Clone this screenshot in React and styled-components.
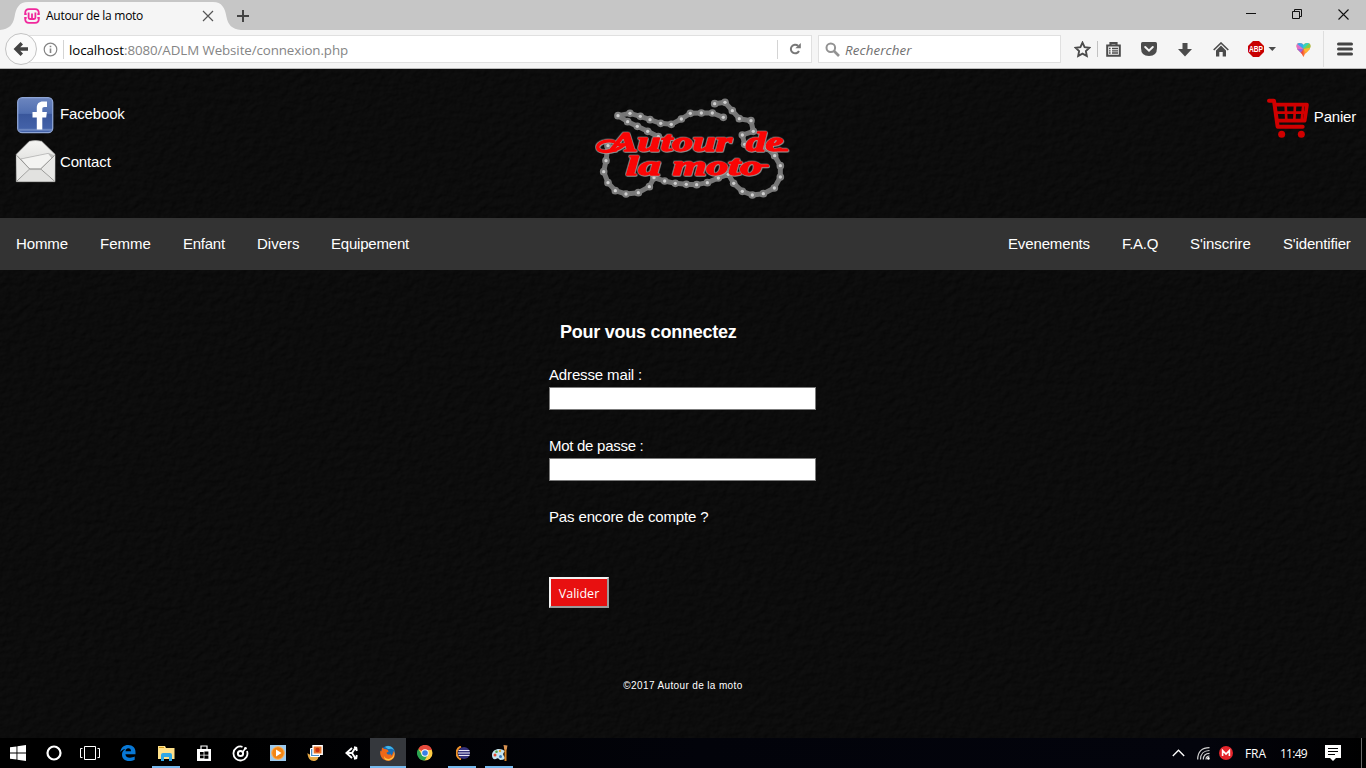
import React from "react";
import styled, { createGlobalStyle } from "styled-components";

const GlobalStyle = createGlobalStyle`
  * { box-sizing: border-box; }
  body { margin: 0; background: #0c0c0c; overflow: hidden; }
`;

const Screen = styled.div`
  width: 1366px;
  height: 768px;
  display: flex;
  flex-direction: column;
  font-family: "Open Sans", "Noto Sans", sans-serif;
`;

/* ---------- Browser ---------- */
const TabStrip = styled.div`
  height: 30px;
  flex: none;
  display: flex;
  background: #c6c6c6;
`;
const Tab = styled.div`
  position: relative;
  width: 231px;
  height: 30px;
  padding: 2px 17px 0 24px;
  display: flex;
  align-items: center;
  font: 12px/28px "Open Sans", sans-serif;
  color: #000;
`;
const TabShape = styled.svg`
  position: absolute;
  left: 0;
  top: 0;
`;
const TabTitle = styled.span`
  position: relative;
  flex: 1;
  margin-left: 6px;
  letter-spacing: -0.27px;
  white-space: nowrap;
`;
const Glyph = styled.svg`
  position: relative;
  display: block;
  flex: none;
`;
const NewTab = styled.div`
  padding: 9px 0 0 5px;
`;
const WindowButtons = styled.div`
  margin-left: auto;
  display: flex;
  height: 28px;
`;
const WindowButton = styled.div`
  width: 46px;
  display: grid;
  place-items: center;
`;
const Toolbar = styled.div`
  height: 39px;
  flex: none;
  display: flex;
  align-items: center;
  background: #f5f5f5;
  border-bottom: 1px solid #b9b9b9;
`;
const BackButton = styled.div`
  position: relative;
  z-index: 1;
  width: 32px;
  height: 32px;
  margin-left: 5px;
  border: 1px solid #c3c3c3;
  border-radius: 50%;
  background: #fafafa;
  display: grid;
  place-items: center;
`;
const Field = styled.div`
  width: ${(p) => p.$width}px;
  height: 28px;
  margin-left: ${(p) => p.$gap}px;
  padding-left: ${(p) => p.$pad}px;
  display: flex;
  align-items: center;
  background: #fff;
  border: 1px solid #e0e0e0;
  font-size: 13.33px;
`;
const Divider = styled.div`
  width: 1px;
  height: ${(p) => p.$height}px;
  margin-left: ${(p) => p.$gap || 0}px;
  background: ${(p) => p.$color || "#d4d4d4"};
  flex: none;
`;
const Url = styled.span`
  flex: 1;
  margin-left: 5px;
  padding-top: 1px;
  color: #858585;
  letter-spacing: -0.09px;
  white-space: pre;
  b { font-weight: 400; color: #000; }
`;
const Reload = styled.div`
  width: 33px;
  display: grid;
  place-items: center;
`;
const Placeholder = styled.span`
  margin-left: 5px;
  padding-top: 1px;
  font-style: italic;
  letter-spacing: 0.12px;
  color: #707070;
`;
const Tools = styled.div`
  margin-left: 6px;
  display: flex;
  align-items: center;
`;
const Tool = styled.div`
  width: ${(p) => p.$width}px;
  display: grid;
  place-items: center;
`;

/* ---------- Site ---------- */
const Page = styled.div`
  position: relative;
  flex: 1;
  color: #fff;
  font: 15px "Liberation Sans", Arial, sans-serif;
`;
const Texture = styled.svg`
  position: absolute;
  inset: 0;
`;
const Site = styled.div`
  position: relative;
`;
const Header = styled.header`
  height: 149px;
  display: grid;
  grid-template-columns: 580px 220px 1fr;
`;
const Contacts = styled.div`
  padding: 21px 0 0 15px;
`;
const ContactLink = styled.div`
  height: 48px;
  display: flex;
  align-items: center;
  gap: 3px;
  letter-spacing: -0.15px;
`;
const ContactName = styled.span`
  padding-bottom: 2px;
`;
const Logo = styled.svg`
  margin-top: 16px;
`;
const LogoText = styled.text`
  font: italic 700 82px "Liberation Serif", serif;
  fill: #fa0505;
  stroke: #fa0505;
  stroke-width: 4px;
  stroke-linejoin: round;
`;
const LogoWords = styled.g`
  filter: drop-shadow(2px 2px 0 #a5a5a5) drop-shadow(-2px -1px 0 #a5a5a5);
`;
const Cart = styled.div`
  padding: 29px 10px 0 0;
  height: 70px;
  display: flex;
  justify-content: flex-end;
  gap: 5px;
  line-height: 38px;
  letter-spacing: -0.2px;
`;
const Nav = styled.nav`
  height: 52px;
  display: flex;
  justify-content: space-between;
  background: #333;
`;
const NavGroup = styled.div`
  display: flex;
`;
const NavItem = styled.a`
  width: ${(p) => p.$width}px;
  padding-left: 16px;
  line-height: 52px;
  letter-spacing: ${(p) => p.$spacing}px;
  white-space: nowrap;
`;
const Form = styled.form`
  width: 267px;
  margin: 50px 0 0 549px;
`;
const Title = styled.h3`
  margin: 0 0 19px 11px;
  font-size: 18px;
  line-height: 24px;
  letter-spacing: -0.24px;
  white-space: nowrap;
`;
const Label = styled.label`
  display: block;
  line-height: 24px;
  letter-spacing: ${(p) => p.$spacing || -0.14}px;
`;
const Input = styled.input`
  display: block;
  width: 267px;
  height: 23px;
  margin: 0 0 24px;
  padding: 0;
  background: #fff;
  border: 1px solid #7b7b7b;
`;
const Submit = styled.button`
  display: block;
  width: 60px;
  height: 31px;
  margin-top: 48px;
  padding: 1px 0 0;
  color: #fff;
  background: #e81010;
  border: 2px solid;
  border-color: #f2f2f2 #999 #999 #f2f2f2;
  font: 12.5px "Open Sans", sans-serif;
`;
const Footer = styled.footer`
  margin-top: 70px;
  text-align: center;
  font-size: 10px;
  line-height: 16px;
  letter-spacing: 0.37px;
`;

/* ---------- Taskbar ---------- */
const Taskbar = styled.div`
  height: 30px;
  flex: none;
  display: flex;
  background: linear-gradient(90deg, #000 0 200px, #02030a 700px, #03040c 1200px, #000);
  color: #fff;
  font-size: 12px;
`;
const Task = styled.div`
  position: relative;
  width: ${(p) => p.$width || 37}px;
  height: 30px;
  display: grid;
  place-items: center;
  background: ${(p) => (p.$active ? "#35383d" : "transparent")};
  &::after {
    content: "";
    display: ${(p) => (p.$open || p.$active ? "block" : "none")};
    position: absolute;
    bottom: 0;
    left: ${(p) => (p.$active ? 0 : 4)}px;
    right: ${(p) => (p.$active ? 0 : 5)}px;
    height: 2px;
    background: #76b9ed;
  }
`;
const Tray = styled.div`
  margin-left: auto;
  padding-right: 4px;
  display: flex;
  align-items: center;
`;
const TrayText = styled.span`
  width: ${(p) => p.$width}px;
  margin-left: ${(p) => p.$gap}px;
  letter-spacing: ${(p) => p.$spacing || 0}px;
  white-space: nowrap;
`;
const TrayIcon = styled.div`
  margin-left: ${(p) => p.$gap}px;
`;

const chains = [
  [[404,56],[435,52],[457,77],[478,101],[513,107],[520,139],[487,150],[494,178]],
  [[430,97],[397,84],[364,84],[331,85],[304,102],[274,118],[242,115],[210,104],[181,94],[150,85],[114,92],[143,110],[172,124],[203,139],[235,155],[262,174]],
  [[84,182],[78,227],[71,260],[84,293],[106,317],[138,327],[175,323],[208,305],[222,278],[254,288],[286,295],[319,298],[350,299],[382,293],[415,279],[445,268],[461,295],[487,319],[517,330],[550,326],[583,309],[601,276],[601,242],[584,212],[562,190]],
];

function Chain({ points }) {
  return (
    <g>
      <polyline points={points.map((p) => p.join(",")).join(" ")} fill="none" stroke="#767676" strokeWidth="15" strokeLinejoin="round" />
      {points.map(([x, y]) => (
        <g key={`${x}-${y}`}>
          <circle cx={x} cy={y} r="11.5" fill="#7c7c7c" />
          <circle cx={x} cy={y} r="5" fill="#cfcfcf" />
        </g>
      ))}
    </g>
  );
}

function LogoLine({ children, x, y, width }) {
  return (
    <LogoText x={x} y={y} textLength={width} lengthAdjust="spacingAndGlyphs">
      {children}
    </LogoText>
  );
}

function BrandLogo() {
  return (
    <Logo width="220" height="125" viewBox="0 0 660 375">
      {chains.map((points, i) => <Chain key={i} points={points} />)}
      <LogoWords>
        <path d="M132 180C100 205 52 205 53 186C55 170 85 164 102 170" fill="none" stroke="#fa0505" strokeWidth="10" strokeLinecap="round" />
        <path d="M530 242H563M590 195H621" fill="none" stroke="#fa0505" strokeWidth="9" strokeLinecap="round" />
        <LogoLine x={90} y={197} width={366}>Autour</LogoLine>
        <LogoLine x={498} y={197} width={112}>de</LogoLine>
        <LogoLine x={138} y={269} width={104}>la</LogoLine>
        <LogoLine x={278} y={269} width={268}>moto</LogoLine>
      </LogoWords>
    </Logo>
  );
}

function FacebookIcon() {
  return (
    <svg width="42" height="42" viewBox="0 0 42 42">
      <defs>
        <linearGradient id="fb" x2="0" y2="1"><stop stopColor="#6c86bf" /><stop offset=".45" stopColor="#506eb0" /><stop offset=".46" stopColor="#39569b" /><stop offset="1" stopColor="#4665ac" /></linearGradient>
      </defs>
      <rect x="2.7" y="4.7" width="35" height="35" rx="4.5" fill="url(#fb)" stroke="#8ea5d5" strokeWidth="1.3" />
      <rect x="4" y="35.8" width="33" height="2" fill="#7c95cb" opacity=".7" />
      <path d="M21.8 36.5V24.5H17.5V19h4.3v-4c0-4.5 2.2-6.6 6.2-6.6h4V14h-2.4c-1.8 0-2.3.7-2.3 2v3h4.6l-.7 5.5h-3.9v12z" fill="#fff" />
    </svg>
  );
}

function EnvelopeIcon() {
  return (
    <svg width="42" height="44" viewBox="0 0 126 132">
      <defs>
        <linearGradient id="env" x2="0" y2="1"><stop stopColor="#f5f5f3" /><stop offset="1" stopColor="#d0d0ce" /></linearGradient>
      </defs>
      <path d="M4 43 43 4Q61-1 80 4L120 43V125H4Z" fill="url(#env)" stroke="#b4b4b2" strokeWidth="2" />
      <path d="M6 46 44 86H77L118 46 103 40 17 56Z" fill="#c3c3c1" />
      <path d="M17 57 100 40 111 54 77 87H44Z" fill="#f3f3f1" stroke="#aaa" strokeWidth="2" />
      <path d="M4 45 44 88 6 123ZM120 45 77 88 118 123Z" fill="#e8e8e6" />
      <path d="M5 46 44 87H77L119 46M6 123 44 87M77 87 118 123" fill="none" stroke="#979795" strokeWidth="3" />
      <path d="M7 124 42 91H79L117 124Z" fill="#e2e2e0" />
    </svg>
  );
}

function CartIcon() {
  return (
    <svg width="42" height="41" viewBox="81 39 126 123" fill="none" stroke="#d00000" strokeLinecap="round" strokeLinejoin="round">
      <path d="M87 47H102L113 125H188" strokeWidth="12" />
      <path d="M106 59H201L194 107H112" strokeWidth="11" />
      <path d="M109 83H198M137 60 139 106M165 60 163 106M190 60 185 106" strokeWidth="8" />
      <circle cx="125" cy="148" r="10.5" fill="#d00000" stroke="none" />
      <circle cx="184" cy="148" r="10.5" fill="#d00000" stroke="none" />
    </svg>
  );
}

function Browser() {
  return (
    <>
      <TabStrip>
        <Tab>
          <TabShape width="241" height="30"><path d="M0 30C9 29 13 25 14.5 17C16 8 19 2 28 2H213C222 2 225 8 226.5 17C228 25 232 29 241 30Z" fill="#f5f5f5" /></TabShape>
          <Glyph width="16" height="16" viewBox="0 0 16 16" fill="none" stroke="#f0289c" strokeWidth="1.8">
            <path d="M1.2 6.2V5Q1.2 1.2 5 1.2h6Q14.8 1.2 14.8 5v1.2M1.2 9.8V11Q1.2 14.8 5 14.8h6q3.8 0 3.8-3.8V9.8M.2 6.2h2.5M13.3 6.2h2.5M.2 9.8h2.5M13.3 9.8h2.5" />
            <path d="M4.6 4.5V9.5Q4.6 11 6 11h4q1.4 0 1.4-1.5v-5M8 5.5V11" />
          </Glyph>
          <TabTitle>Autour de la moto</TabTitle>
          <Glyph width="12" height="12" viewBox="0 0 12 12"><path d="M1 1 11 11M11 1 1 11" stroke="#555" strokeWidth="1.2" /></Glyph>
        </Tab>
        <NewTab><Glyph width="14" height="14"><path d="M7 1v12M1 7h12" stroke="#444" strokeWidth="2" /></Glyph></NewTab>
        <WindowButtons>
          <WindowButton><svg width="10" height="10"><path d="M0 4.5h10" stroke="#111" /></svg></WindowButton>
          <WindowButton><svg width="10" height="10" fill="none" stroke="#111"><path d="M.5 2.5h7v7h-7zM2.5 2.5v-2h7v7h-2" /></svg></WindowButton>
          <WindowButton><svg width="11" height="11"><path d="M.5.5l10 10M10.5.5l-10 10" stroke="#111" strokeWidth="1.1" /></svg></WindowButton>
        </WindowButtons>
      </TabStrip>
      <Toolbar>
        <BackButton><svg width="16" height="16" viewBox="0 0 16 16"><path d="M8.8 2.2 3 8l5.8 5.8M3 8h12" fill="none" stroke="#424242" strokeWidth="3.4" /></svg></BackButton>
        <Field $width={783} $gap={-8} $pad={13}>
          <Glyph width="15" height="15" viewBox="0 0 15 15" fill="none" stroke="#858585"><circle cx="7.5" cy="7.5" r="6.3" strokeWidth="1.2" /><path d="M7.5 6.5V11M7.5 3.7v1.6" strokeWidth="1.6" /></Glyph>
          <Divider $height={19} $gap={5} />
          <Url><b>localhost</b>:8080/ADLM Website/connexion.php</Url>
          <Divider $height={19} />
          <Reload><svg width="12" height="12" viewBox="0 0 12 12"><path d="M9 2.8A4.3 4.3 0 1 0 10 8" fill="none" stroke="#777" strokeWidth="2" /><path d="M11.8 0V5.3H6.3Z" fill="#777" /></svg></Reload>
        </Field>
        <Field $width={243} $gap={6} $pad={6}>
          <Glyph width="15" height="15" viewBox="0 0 15 15" fill="none" stroke="#929292"><circle cx="5.8" cy="5.8" r="4.3" strokeWidth="2" /><path d="m9 9 5 5" strokeWidth="2.6" /></Glyph>
          <Placeholder>Rechercher</Placeholder>
        </Field>
        <Tools>
          <Tool $width={30}><svg width="17" height="17" viewBox="0 0 17 17"><path d="m8.5 1.6 2.1 4.5 4.9.6-3.6 3.4.9 4.9-4.3-2.4L4.2 15l.9-4.9L1.5 6.7l4.9-.6z" fill="none" stroke="#4b4b4b" strokeWidth="1.9" /></svg></Tool>
          <Divider $height={16} $color="#c2c2c2" />
          <Tool $width={30}><svg width="15" height="15" viewBox="0 0 15 15" fill="none" stroke="#4b4b4b"><path d="M1.2 3.5h12.6v10.3H1.2z" strokeWidth="2" /><path d="M4.5 3V1.2h6V3" strokeWidth="2.2" /><path d="M3 6.5h1.6M3 8.8h1.6M3 11h1.6M6 6.5h6M6 8.8h6M6 11h6" strokeWidth="1.3" /></svg></Tool>
          <Tool $width={42}><svg width="16" height="14" viewBox="0 0 16 14"><path d="M1.5 0h13Q16 0 16 1.5V6Q16 14 8 14T0 6V1.5Q0 0 1.5 0Z" fill="#4b4b4b" /><path d="m4.2 5 3.8 3.7L11.8 5" fill="none" stroke="#f5f5f5" strokeWidth="2" strokeLinecap="round" /></svg></Tool>
          <Tool $width={30}><svg width="14" height="15" viewBox="0 0 14 15"><path d="M4.5 1h5v6H14l-7 7.5L0 7h4.5z" fill="#4b4b4b" /></svg></Tool>
          <Tool $width={42}><svg width="16" height="15" viewBox="0 0 16 15"><path d="m.7 8 7.3-7 7.3 7" fill="none" stroke="#4b4b4b" strokeWidth="1.6" /><path d="m8 3.4 5 5V14.5H9.7V10H6.3v4.5H3V8.4z" fill="#4b4b4b" /></svg></Tool>
          <Tool $width={41}><svg width="29" height="16" viewBox="0 0 29 16"><path d="M5 0h6l5 5v6l-5 5H5l-5-5V5z" fill="#c80000" /><text x="1" y="11" fill="#fff" fontFamily="Liberation Sans" fontWeight="700" fontSize="8.2" textLength="14" lengthAdjust="spacingAndGlyphs">ABP</text><path d="M20.5 6H28l-3.7 4z" fill="#4b4b4b" /></svg></Tool>
          <Tool $width={40}>
            <svg width="15" height="15" viewBox="0 0 15 15">
              <defs><clipPath id="heart"><path d="M7.5 15Q6.6 11.8 3 9 .5 7 .5 4.3.5 1 3.8 1 6.5 1 7.5 3 8.5 1 11.2 1q3.3 0 3.3 3.3Q14.5 7 12 9 8.4 11.8 7.5 15Z" /></clipPath></defs>
              <g clipPath="url(#heart)"><path d="M0 0h15v15H0z" fill="#ff8a38" /><path d="M7.5 7 0 0v9z" fill="#e070c8" /><path d="M7.5 7 0 1V0h8z" fill="#35a8f0" /><path d="M7.5 7 6.5 0H15z" fill="#30d5c0" /><path d="M7.5 7 15 0v7z" fill="#7ed04a" /><path d="m7.5 7 7.5-1.5V9l-4 4z" fill="#ffb52e" /><path d="M7.5 7 0 7v3l5 3z" fill="#9b65dd" /><path d="M7.5 7 4 12l3.5 3z" fill="#f0503c" /></g>
            </svg>
          </Tool>
          <Divider $height={36} $color="#dedede" />
          <Tool $width={42}><svg width="16" height="14"><path d="M1.5 2h13M1.5 7h13M1.5 12h13" stroke="#444" strokeWidth="3" strokeLinecap="round" /></svg></Tool>
        </Tools>
      </Toolbar>
    </>
  );
}

const leftLinks = [
  ["Homme", 84, -0.1],
  ["Femme", 83, 0],
  ["Enfant", 74, -0.25],
  ["Divers", 74, 0],
  ["Equipement", 110, -0.2],
];
const rightLinks = [
  ["Evenements", 114, -0.14],
  ["F.A.Q", 68, -0.3],
  ["S'inscrire", 93, -0.05],
  ["S'identifier", 83, -0.16],
];

function LoginPage() {
  return (
    <Page>
      <Texture width="1366" height="669">
        <filter id="stone" x="0" y="0" width="100%" height="100%" colorInterpolationFilters="sRGB">
          <feTurbulence type="fractalNoise" baseFrequency="0.12 0.15" numOctaves="4" seed="8" />
          <feDiffuseLighting surfaceScale="1.1" lightingColor="#111111"><feDistantLight azimuth="225" elevation="45" /></feDiffuseLighting>
        </filter>
        <rect width="1366" height="669" fill="#0c0c0c" filter="url(#stone)" />
      </Texture>
      <Site>
        <Header>
          <Contacts>
            <ContactLink><FacebookIcon /><ContactName>Facebook</ContactName></ContactLink>
            <ContactLink><EnvelopeIcon /><ContactName>Contact</ContactName></ContactLink>
          </Contacts>
          <BrandLogo />
          <Cart><CartIcon />Panier</Cart>
        </Header>
        <Nav>
          <NavGroup>{leftLinks.map(([t, w, s]) => <NavItem key={t} $width={w} $spacing={s}>{t}</NavItem>)}</NavGroup>
          <NavGroup style={undefined}>{rightLinks.map(([t, w, s], i) => <NavItem key={t} $width={i === 3 ? w + 16 : w} $spacing={s}>{t}</NavItem>)}</NavGroup>
        </Nav>
        <Form>
          <Title>Pour vous connectez</Title>
          <Label>Adresse mail :</Label>
          <Input type="email" />
          <Label $spacing={-0.28}>Mot de passe :</Label>
          <Input type="password" />
          <Label as="div">Pas encore de compte ?</Label>
          <Submit type="button">Valider</Submit>
        </Form>
        <Footer>©2017 Autour de la moto</Footer>
      </Site>
    </Page>
  );
}

function DesktopTaskbar() {
  return (
    <Taskbar>
      <Task $width={36}><svg width="16" height="16" viewBox="0 0 16 16" fill="#fff"><path d="M0 2.3 6.5 1.4v6.1H0zM7.4 1.3 16 0v7.5H7.4zM0 8.4h6.5v6.2L0 13.7zM7.4 8.4H16V16l-8.6-1.2z" /></svg></Task>
      <Task $width={36}><svg width="16" height="16"><circle cx="8" cy="8" r="6.5" fill="none" stroke="#fff" strokeWidth="2.2" /></svg></Task>
      <Task $width={36}><svg width="20" height="14" fill="none" stroke="#fff"><path d="M4.5.5h11v13h-11zM2.5 2.5H.5v9h2M17.5 2.5h2v9h-2" /></svg></Task>
      <Task $width={40}><svg width="16" height="16" viewBox="0 0 16 16"><path d="M.3 7C1 2.5 4 0 8.2 0 12.8 0 15.5 3 15.5 7v2.2H5.4c.2 2.5 2 3.5 4.6 3.5 1.9 0 3.4-.5 4.7-1.2v3.2C13.3 15.5 11.3 16 9.3 16 4.5 16 2 13.2 2 9.7c0-2.8 1.3-4.8 3.6-5.8C3.2 4.1 1.5 5.2.3 7zm5.2-.7H11c0-2-.9-3-2.7-3-1.6 0-2.5 1.2-2.8 3z" fill="#0878d6" fillRule="evenodd" /></svg></Task>
      <Task $open><svg width="17" height="15" viewBox="0 0 17 15"><path d="M0 0h7l1 2h8.5v11H0z" fill="#ffe18a" /><path d="M1 1h5v1H1z" fill="#d49b19" /><path d="M3 15V9q0-2 2-2h7q2 0 2 2v6h-3v-4H6v4z" fill="#2fa8e5" /></svg></Task>
      <Task><svg width="14" height="16" viewBox="0 0 14 16"><path d="M4 4V1h6v3" fill="none" stroke="#fff" strokeWidth="1.2" /><path d="M0 4h14v12H0z" fill="#fff" /><path d="M3 7h3.6v2.8H3zM7.4 6.5h4v3.3h-4zM3 10.5h3.6v2.8H3zM7.4 10.5h4v3.3h-4z" fill="#000" /></svg></Task>
      <Task><svg width="17" height="17" viewBox="0 0 17 17" fill="none" stroke="#fff"><path d="M10.5 1.8A7 7 0 1 0 15 6" strokeWidth="1.8" /><circle cx="8.5" cy="8.5" r="2.6" strokeWidth="2" /><path d="m10.8 7 2.7-4" strokeWidth="1.5" /><circle cx="13.5" cy="3.3" r="1.3" fill="#fff" stroke="none" /></svg></Task>
      <Task><svg width="16" height="16"><path d="M0 0h16v16H0z" fill="#9ecaed" /><circle cx="8" cy="8" r="6.3" fill="#f38614" stroke="#ffb45d" /><path d="m6 4.5 5.5 3.5L6 11.5z" fill="#fff" /></svg></Task>
      <Task><svg width="16" height="16" viewBox="0 0 16 16"><path d="M.5 8c2 2 5 3 11 3 0 3-2 5-5 5S.5 13 .5 8z" fill="#e5a844" /><path d="M3.5 3.5h9v8h-9z" fill="#4a90c8" stroke="#fff" /><path d="M6 .8h9.2v8.4H6z" fill="#e8742a" stroke="#fff" strokeWidth="1.4" /><circle cx="10.5" cy="5" r="2.2" fill="#c92f10" /></svg></Task>
      <Task><svg width="13" height="14" viewBox="0 0 13 14" fill="none" stroke="#fff" strokeWidth="1.9"><path d="M7 2 1.3 7 7 12M1.5 7h5.5M7 7l3.5-5.5M7 7l3.5 5.5M9 1.3l2.3.4.5 3.3M11.8 9l-.5 3.3-2.3.4" /></svg></Task>
      <Task $active $width={36}><svg width="16" height="16" viewBox="0 0 16 16"><circle cx="8" cy="7.8" r="7" fill="#166cb5" /><path d="M5 2c3-2 7-1 9 3-3-2-4-1-6-1z" fill="#42b6e8" /><path d="M2 2.5 4.5 4Q8 3.5 8.7 6.5L6.5 7.8C7 10 9.5 10 11 8.7 10 12 12.5 11 13.5 6 17 11 12.5 16 8 15.8 2 15.5-.8 10 .5 5.5l1 1z" fill="#ee6818" /><path d="M14 5q1 7-5 9-4 0-5-3 0 5 5 4.5Q16 14 14 5Z" fill="#ffc540" /></svg></Task>
      <Task $width={38}><svg width="16" height="16" viewBox="0 0 16 16"><circle cx="8" cy="8" r="7.5" fill="#fc4" /><path d="M8 8 1.2 4A7.5 7.5 0 0 1 15 5H8z" fill="#e64a3c" /><path d="M1.2 4A7.5 7.5 0 0 0 7.6 15.5L11 9.5 8 8 5 9.7z" fill="#2aa552" /><circle cx="8" cy="8" r="3.7" fill="#fff" /><circle cx="8" cy="8" r="2.8" fill="#397fe5" /></svg></Task>
      <Task $open><svg width="14" height="14" viewBox="0 0 14 14"><path d="M5 .5a7 7 0 0 0 0 13" fill="none" stroke="#f0932b" strokeWidth="2" /><circle cx="8" cy="7" r="6" fill="#35327b" /><path d="M2.5 4.5h11M2 7h12M2.5 9.5h11" stroke="#e8e6f5" strokeWidth="1.2" /></svg></Task>
      <Task $open><svg width="16" height="16" viewBox="0 0 16 16"><path d="M0 10C0 4 8 2 13 6q-3 3-1 5 3 4-4 4-2-3-4-1-4 1-4-4z" fill="#c4e3ef" /><circle cx="3" cy="10" r="1.5" fill="#e3492f" /><circle cx="4.5" cy="6.7" r="1.3" fill="#52a449" /><circle cx="8" cy="6" r="1.2" fill="#e4a230" /><circle cx="8.5" cy="11.5" r="1.5" fill="#397bbf" /><path d="M13.5 16V3" stroke="#d78322" strokeWidth="2" /><path d="m11.5 0 4 .5-.8 4h-2.4z" fill="#d99352" /></svg></Task>
      <Tray>
        <TrayIcon $gap={0}><Glyph width="13" height="8"><path d="m.8 7 5.7-5.8L12.2 7" fill="none" stroke="#fff" strokeWidth="1.3" /></Glyph></TrayIcon>
        <TrayIcon $gap={12}><Glyph width="13" height="13" viewBox="0 0 13 13" fill="none" stroke="#d5d5d5" strokeWidth="1.2"><path d="M.7 12.5C.7 5 5 .7 12.5.7M3.5 12.5c0-5.5 3.5-9 9-9M6.3 12.5c0-4 2.2-6.2 6.2-6.2M9 12.5Q9 9 12.5 9" /><circle cx="11.4" cy="11.4" r="1.3" fill="#fff" stroke="none" /></Glyph></TrayIcon>
        <TrayIcon $gap={9}><Glyph width="14" height="14"><circle cx="7" cy="7" r="7" fill="#e5252b" /><path d="M3.6 10V4.5L7 8l3.4-3.5V10" fill="none" stroke="#fff" strokeWidth="1.6" /></Glyph></TrayIcon>
        <TrayText $width={22} $gap={12} $spacing={-0.1}>FRA</TrayText>
        <TrayText $width={27} $gap={13} $spacing={-0.75}>11:49</TrayText>
        <TrayIcon $gap={18}><Glyph width="16" height="16"><path d="M0 0h16v13h-5l-3 3-3-3H0z" fill="#fff" /><path d="M3 3.5h10M3 6.5h10M3 9.5h7" stroke="#000" strokeWidth="1.1" /></Glyph></TrayIcon>
        <TrayIcon $gap={20}><Divider $height={30} $color="#686868" /></TrayIcon>
      </Tray>
    </Taskbar>
  );
}

export default function App() {
  return (
    <Screen>
      <GlobalStyle />
      <Browser />
      <LoginPage />
      <DesktopTaskbar />
    </Screen>
  );
}
